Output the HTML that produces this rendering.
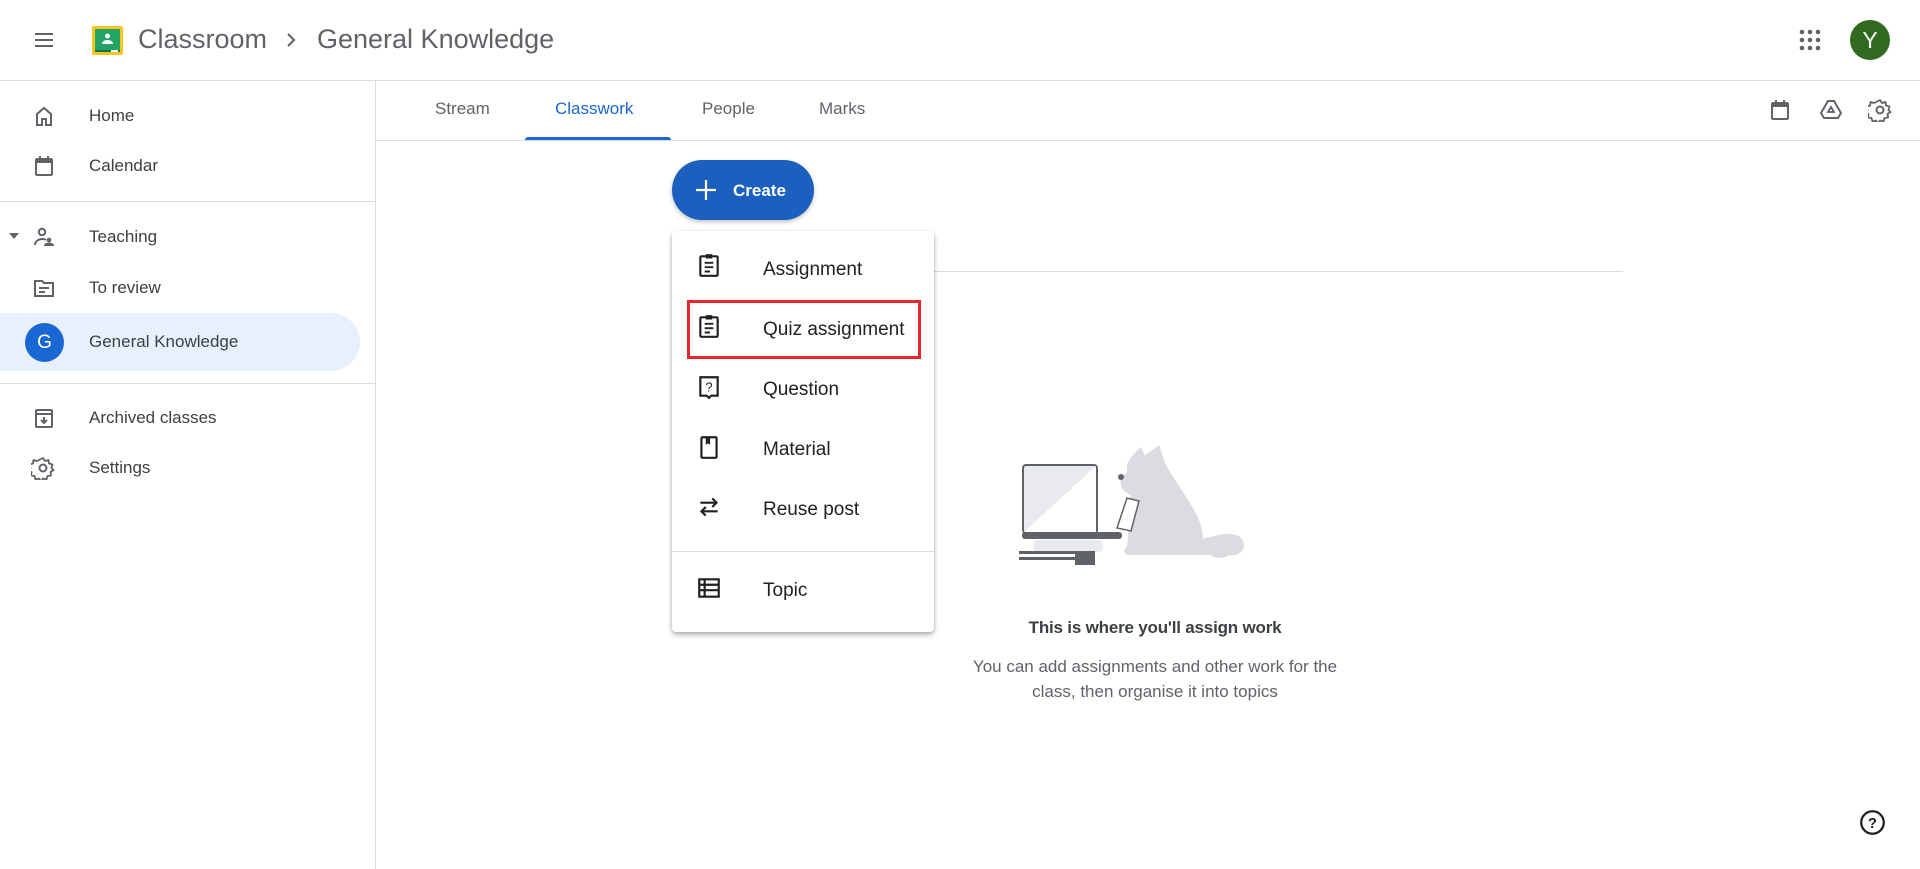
<!DOCTYPE html>
<html><head><meta charset="utf-8"><style>
*{margin:0;padding:0;box-sizing:border-box}
body{width:1920px;height:869px;overflow:hidden;background:#fff;font-family:"Liberation Sans",Arial,sans-serif;color:#3c4043;position:relative}
.a{position:absolute}
.ic{position:absolute;width:24px;height:24px}
.side{font-size:17px;color:#3c4043}
.tab{font-size:17px;color:#5f6368;top:99px}
.mi{font-size:19px;color:#202124;left:763px}
.mic{left:696px;width:26px;height:26px}
</style></head><body>
<!-- header -->
<svg class="ic" style="left:32px;top:28px" viewBox="0 0 24 24"><path d="M3 6h18M3 12h18M3 18h18" stroke="#5f6368" stroke-width="2"/></svg>
<svg class="a" style="left:92px;top:26px" width="31" height="29" viewBox="0 0 31 29"><rect x="0" y="0" width="31" height="29" rx="2" fill="#f7c521"/><rect x="3" y="3" width="25" height="21" fill="#21a465"/><rect x="3" y="24" width="25" height="2" fill="#0e7a42"/><circle cx="15.5" cy="10" r="2.5" fill="#fff"/><path d="M10 18c0-3 3-4 5.5-4s5.5 1 5.5 4z" fill="#fff"/><rect x="19" y="24" width="7" height="2" fill="#fff"/></svg>
<div class="a" style="left:138px;top:24px;font-size:27px;color:#5f6368">Classroom</div>
<svg class="a" style="left:284px;top:31px" width="14" height="18" viewBox="0 0 14 18"><path d="M4 3l6 6-6 6" stroke="#5f6368" stroke-width="2" fill="none"/></svg>
<div class="a" style="left:317px;top:24px;font-size:27px;color:#5f6368">General Knowledge</div>
<svg class="a" style="left:1799px;top:29px" width="22" height="22" viewBox="0 0 22 22" fill="#5f6368"><circle cx="3" cy="3" r="2.3"/><circle cx="11" cy="3" r="2.3"/><circle cx="19" cy="3" r="2.3"/><circle cx="3" cy="11" r="2.3"/><circle cx="11" cy="11" r="2.3"/><circle cx="19" cy="11" r="2.3"/><circle cx="3" cy="19" r="2.3"/><circle cx="11" cy="19" r="2.3"/><circle cx="19" cy="19" r="2.3"/></svg>
<div class="a" style="left:1850px;top:20px;width:40px;height:40px;border-radius:50%;background:#2f6a1f;color:#fff;font-size:23px;text-align:center;line-height:40px">Y</div>
<div class="a" style="left:0;top:80px;width:1920px;height:1px;background:#dadce0"></div>
<!-- sidebar -->
<div class="a" style="left:375px;top:80px;width:1px;height:789px;background:#dadce0"></div>
<svg class="ic" style="left:32px;top:104px" viewBox="0 0 24 24"><path d="M5 21V10l7-6 7 6v11h-5v-6h-4v6z" stroke="#5f6368" stroke-width="2" fill="none"/></svg>
<div class="a side" style="left:89px;top:106px">Home</div>
<svg class="ic" style="left:32px;top:154px" viewBox="0 0 24 24"><rect x="4" y="5" width="16" height="16" rx="1" stroke="#5f6368" stroke-width="2" fill="none"/><rect x="4" y="5" width="16" height="4" fill="#5f6368"/><path d="M8 2v4M16 2v4" stroke="#5f6368" stroke-width="2"/></svg>
<div class="a side" style="left:89px;top:156px">Calendar</div>
<div class="a" style="left:0;top:201px;width:375px;height:1px;background:#dadce0"></div>
<svg class="a" style="left:9px;top:233px" width="10" height="6"><path d="M0 0h10L5 6z" fill="#5f6368"/></svg>
<svg class="ic" style="left:32px;top:225px" viewBox="0 0 24 24"><circle cx="10" cy="7" r="3.2" stroke="#5f6368" stroke-width="2" fill="none"/><path d="M3 20c0-4 4-6 7-6s4 1 4 1" stroke="#5f6368" stroke-width="2" fill="none"/><circle cx="17" cy="15" r="2.3" fill="#5f6368"/><path d="M12 21c0-2.5 2.5-3.5 5-3.5s5 1 5 3.5z" fill="#5f6368"/></svg>
<div class="a side" style="left:89px;top:227px">Teaching</div>
<svg class="ic" style="left:32px;top:276px" viewBox="0 0 24 24"><path d="M3 5h7l2 2h9v13H3z" stroke="#5f6368" stroke-width="2" fill="none"/><path d="M7 12h10M7 16h6" stroke="#5f6368" stroke-width="2"/></svg>
<div class="a side" style="left:89px;top:278px">To review</div>
<div class="a" style="left:0;top:313px;width:360px;height:58px;background:#e8f0fe;border-radius:0 29px 29px 0"></div>
<div class="a" style="left:25px;top:323px;width:39px;height:39px;border-radius:50%;background:#1967d2;color:#fff;font-size:19px;text-align:center;line-height:39px">G</div>
<div class="a side" style="left:89px;top:332px;color:#3c4043">General Knowledge</div>
<div class="a" style="left:0;top:383px;width:375px;height:1px;background:#dadce0"></div>
<svg class="ic" style="left:32px;top:406px" viewBox="0 0 24 24"><rect x="4" y="4" width="16" height="17" rx="1" stroke="#5f6368" stroke-width="2" fill="none"/><path d="M4 8h16M12 11v6M9 14l3 3 3-3" stroke="#5f6368" stroke-width="2" fill="none"/></svg>
<div class="a side" style="left:89px;top:408px">Archived classes</div>
<svg class="ic" style="left:31px;top:456px" viewBox="0 0 24 24"><path d="M12 2l2 3 3.5-1 .5 3.5 3.5 1-1 3.5 2 2-3 2 .5 3.5-3.5.5-1 3.5-3.5-1-2 3-2-3-3.5 1-1-3.5-3.5-.5.5-3.5-3-2 2-2-1-3.5 3.5-1 .5-3.5 3.5 1z" stroke="#5f6368" stroke-width="1.8" fill="none" stroke-linejoin="round"/><circle cx="12" cy="12" r="3.5" stroke="#5f6368" stroke-width="2" fill="none"/></svg>
<div class="a side" style="left:89px;top:458px">Settings</div>
<!-- tabs -->
<div class="a tab" style="left:435px">Stream</div>
<div class="a tab" style="left:555px;color:#1967d2">Classwork</div>
<div class="a tab" style="left:702px">People</div>
<div class="a tab" style="left:819px">Marks</div>
<div class="a" style="left:525px;top:137px;width:146px;height:4px;background:#1967d2;border-radius:3px 3px 0 0"></div>
<div class="a" style="left:376px;top:140px;width:1544px;height:1px;background:#dadce0"></div>
<svg class="ic" style="left:1768px;top:98px" viewBox="0 0 24 24"><rect x="4" y="5" width="16" height="16" rx="1" stroke="#5f6368" stroke-width="2" fill="none"/><rect x="4" y="5" width="16" height="4" fill="#5f6368"/><path d="M8 2v4M16 2v4" stroke="#5f6368" stroke-width="2"/></svg>
<svg class="ic" style="left:1819px;top:98px" viewBox="0 0 24 24"><path d="M9 3h6l7 12-3 5H5l-3-5z" stroke="#5f6368" stroke-width="2" fill="none" stroke-linejoin="round"/><path d="M12 9l3 5H9z" stroke="#5f6368" stroke-width="1.8" fill="none"/></svg>
<svg class="ic" style="left:1868px;top:98px" viewBox="0 0 24 24"><path d="M12 2l2 3 3.5-1 .5 3.5 3.5 1-1 3.5 2 2-3 2 .5 3.5-3.5.5-1 3.5-3.5-1-2 3-2-3-3.5 1-1-3.5-3.5-.5.5-3.5-3-2 2-2-1-3.5 3.5-1 .5-3.5 3.5 1z" stroke="#5f6368" stroke-width="1.8" fill="none" stroke-linejoin="round"/><circle cx="12" cy="12" r="3.5" stroke="#5f6368" stroke-width="2" fill="none"/></svg>
<!-- create -->
<div class="a" style="left:672px;top:160px;width:142px;height:60px;border-radius:30px;background:#1b5fbf;box-shadow:0 2px 4px rgba(0,0,0,.25)"></div>
<svg class="a" style="left:695px;top:179px" width="22" height="22"><path d="M11 1v20M1 11h20" stroke="#fff" stroke-width="2.2"/></svg>
<div class="a" style="left:733px;top:181px;font-size:17px;color:#fff;font-weight:bold">Create</div>
<!-- line -->
<div class="a" style="left:672px;top:271px;width:951px;height:1px;background:#dadce0"></div>
<!-- menu -->
<div class="a" style="left:672px;top:231px;width:262px;height:401px;background:#fff;border-radius:4px;box-shadow:0 3px 6px rgba(0,0,0,.25),0 1px 3px rgba(0,0,0,.15)"></div>
<svg class="a mic" style="top:252px" viewBox="0 0 24 24"><rect x="4" y="4" width="16" height="18" rx="1" stroke="#202124" stroke-width="2" fill="none"/><rect x="9" y="2" width="6" height="4" fill="#202124"/><path d="M8 10h8M8 14h8M8 18h5" stroke="#202124" stroke-width="1.8"/></svg>
<div class="a mi" style="top:259px">Assignment</div>
<svg class="a mic" style="top:313px" viewBox="0 0 24 24"><rect x="4" y="4" width="16" height="18" rx="1" stroke="#202124" stroke-width="2" fill="none"/><rect x="9" y="2" width="6" height="4" fill="#202124"/><path d="M8 10h8M8 14h8M8 18h5" stroke="#202124" stroke-width="1.8"/></svg>
<div class="a mi" style="top:319px">Quiz assignment</div>
<div class="a" style="left:687px;top:300px;width:234px;height:59px;border:3px solid #e8262c"></div>
<svg class="a mic" style="top:374px" viewBox="0 0 24 24"><path d="M4 3h16v17h-6l-2 2-2-2H4z" stroke="#202124" stroke-width="2" fill="none"/><text x="12" y="16" font-size="12" text-anchor="middle" font-family="Liberation Sans" fill="#202124">?</text></svg>
<div class="a mi" style="top:379px">Question</div>
<svg class="a mic" style="top:434px" viewBox="0 0 24 24"><rect x="5" y="3" width="14" height="19" rx="1" stroke="#202124" stroke-width="2" fill="none"/><path d="M9 3v7l2-1.5 2 1.5V3z" fill="#202124"/></svg>
<div class="a mi" style="top:439px">Material</div>
<svg class="a mic" style="top:494px" viewBox="0 0 24 24"><path d="M4 8h15M15 4l4 4-4 4M20 16H5M9 12l-4 4 4 4" stroke="#202124" stroke-width="2" fill="none"/></svg>
<div class="a mi" style="top:499px">Reuse post</div>
<div class="a" style="left:672px;top:551px;width:262px;height:1px;background:#dadce0"></div>
<svg class="a mic" style="top:575px" viewBox="0 0 24 24"><rect x="3" y="4" width="18" height="16" stroke="#202124" stroke-width="2" fill="none"/><path d="M3 9h18M3 14h18M8 4v16" stroke="#202124" stroke-width="2"/></svg>
<div class="a mi" style="top:580px">Topic</div>
<!-- illustration -->
<svg class="a" style="left:1019px;top:443px" width="252" height="122" viewBox="0 0 252 122">
<rect x="4" y="22" width="74" height="68" rx="3" fill="#e8eaed" stroke="#5f6368" stroke-width="2"/>
<path d="M5 89L77 23V89z" fill="#fff"/>
<rect x="3" y="89" width="100" height="7" rx="3" fill="#5f6368"/>
<rect x="14" y="97" width="70" height="12" rx="5" fill="#e8eaed"/>
<rect x="0" y="108" width="75" height="3" fill="#5f6368"/><rect x="0" y="114" width="75" height="3" fill="#5f6368"/>
<rect x="56" y="108" width="20" height="14" fill="#5f6368"/>
<path d="M108 22c4-10 10-14 14-18 2 6 4 8 4 8 6-4 10-6 14-10 3 8 4 14 8 22 18 30 36 50 36 72 20-6 36-8 40 2 4 10-6 16-14 14-6 4-14 4-18 0H110c-6 0-6-6-2-8 2-20 2-40 4-52-6-2-10-6-10-10-2-6 2-10 6-12z" fill="#dadce0"/>
<path d="M108 55l-10 30 14 3 8-30z" fill="#fff" stroke="#5f6368" stroke-width="1.5"/>
<circle cx="102" cy="34" r="3" fill="#5f6368"/>
</svg>
<div class="a" style="left:0;width:2310px;top:618px;text-align:center;font-size:17px;color:#3c4043;font-weight:bold;letter-spacing:-.2px">This is where you'll assign work</div>
<div class="a" style="left:0;width:2310px;top:654px;text-align:center;font-size:17px;line-height:25px;color:#5f6368">You can add assignments and other work for the<br>class, then organise it into topics</div>
<svg class="a" style="left:1859px;top:809px" width="27" height="27" viewBox="0 0 24 24"><circle cx="12" cy="12" r="10" stroke="#202124" stroke-width="2" fill="none"/><text x="12" y="17" font-size="13" text-anchor="middle" font-family="Liberation Sans" font-weight="bold" fill="#202124">?</text></svg>
</body></html>
